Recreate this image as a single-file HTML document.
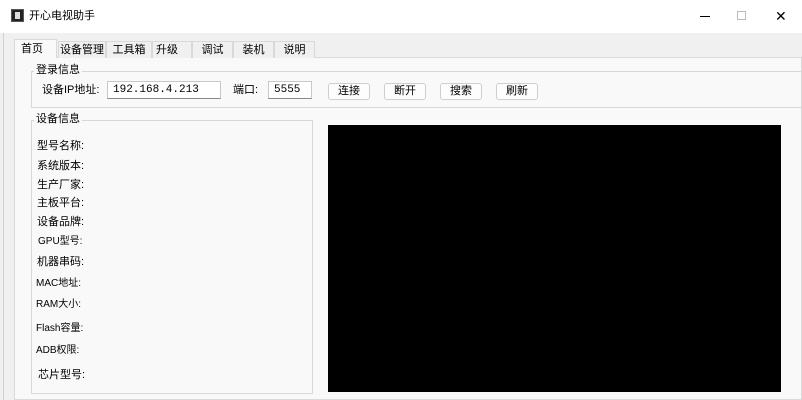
<!DOCTYPE html>
<html><head><meta charset="utf-8"><style>
*{margin:0;padding:0;box-sizing:border-box}
body{width:802px;height:400px;overflow:hidden;background:#f0f0f0;font-family:"Liberation Sans","Noto Sans CJK SC",sans-serif;font-size:11px;color:#000;position:relative}
.a{position:absolute;white-space:nowrap}
.title{left:0;top:0;width:802px;height:33px;background:#fff}
.tab{top:41px;height:17px;line-height:17px;text-align:center;background:#f0f0f0;border:1px solid #d9d9d9;border-bottom:none}
.pane{left:14px;top:57px;width:788px;height:343px;background:#f9f9f9;border:1px solid #dadada}
.grp{border:1px solid #d8d8d8}
.gt{background:#f9f9f9;padding:0 2px;line-height:14px}
.inp{background:#fff;border:1px solid #c8c8c8;border-bottom:1px solid #888;height:18px;line-height:16px;padding-left:5px;font-family:"Liberation Mono",monospace;font-size:11px}
.btn{top:83px;width:42px;height:17px;line-height:15px;text-align:center;background:#fdfdfd;border:1px solid #cfcfcf;border-radius:3px}
.l{left:37px;line-height:14px}
</style></head><body>
<div class="a title"></div>
<div class="a" style="left:11px;top:9px;width:13px;height:13px;background:#222;border:1px solid #555"><div style="margin:2px 3px;width:5px;height:7px;background:#ddd"></div></div>
<div class="a" style="left:29px;top:9px;line-height:14px">开心电视助手</div>
<div class="a" style="left:700px;top:16px;width:10px;height:1px;background:#000"></div>
<div class="a" style="left:737px;top:11px;width:9px;height:9px;border:1px solid #bbb"></div>
<div class="a" style="left:775px;top:7px;font-size:14px;line-height:18px">✕</div>
<div class="a" style="left:3px;top:33px;width:1px;height:367px;background:#d0d0d0"></div>
<div class="a pane"></div>
<div class="a tab" style="left:14px;top:39px;width:43px;height:19px;line-height:19px;background:#f9f9f9;text-align:left;padding-left:6px">首页</div>
<div class="a tab" style="left:58px;width:48px">设备管理</div>
<div class="a tab" style="left:106px;width:46px">工具箱</div>
<div class="a tab" style="left:152px;width:40px;text-align:left;padding-left:3px">升级</div>
<div class="a tab" style="left:192px;width:41px">调试</div>
<div class="a tab" style="left:233px;width:41px">装机</div>
<div class="a tab" style="left:274px;width:41px">说明</div>
<div class="a grp" style="left:31px;top:71px;width:771px;height:37px"></div>
<div class="a gt" style="left:34px;top:63px">登录信息</div>
<div class="a" style="left:42px;top:83px;line-height:14px">设备IP地址:</div>
<div class="a inp" style="left:107px;top:81px;width:114px">192.168.4.213</div>
<div class="a" style="left:233px;top:83px;line-height:14px">端口:</div>
<div class="a inp" style="left:268px;top:81px;width:44px">5555</div>
<div class="a btn" style="left:328px">连接</div>
<div class="a btn" style="left:384px">断开</div>
<div class="a btn" style="left:440px">搜索</div>
<div class="a btn" style="left:496px">刷新</div>
<div class="a grp" style="left:31px;top:120px;width:282px;height:274px"></div>
<div class="a gt" style="left:34px;top:112px">设备信息</div>
<div class="a l" style="top:139px">型号名称:</div>
<div class="a l" style="top:159px">系统版本:</div>
<div class="a l" style="top:178px">生产厂家:</div>
<div class="a l" style="top:196px">主板平台:</div>
<div class="a l" style="top:215px">设备品牌:</div>
<div class="a l" style="top:235px;left:38px;font-size:10px">GPU型号:</div>
<div class="a l" style="top:255px">机器串码:</div>
<div class="a l" style="top:277px;left:36px;font-size:10px">MAC地址:</div>
<div class="a l" style="top:298px;left:36px;font-size:10px">RAM大小:</div>
<div class="a l" style="top:322px;left:36px;font-size:10px">Flash容量:</div>
<div class="a l" style="top:344px;left:36px;font-size:10px">ADB权限:</div>
<div class="a l" style="top:368px;left:38px">芯片型号:</div>
<div class="a" style="left:328px;top:125px;width:453px;height:267px;background:#000"></div>
</body></html>
